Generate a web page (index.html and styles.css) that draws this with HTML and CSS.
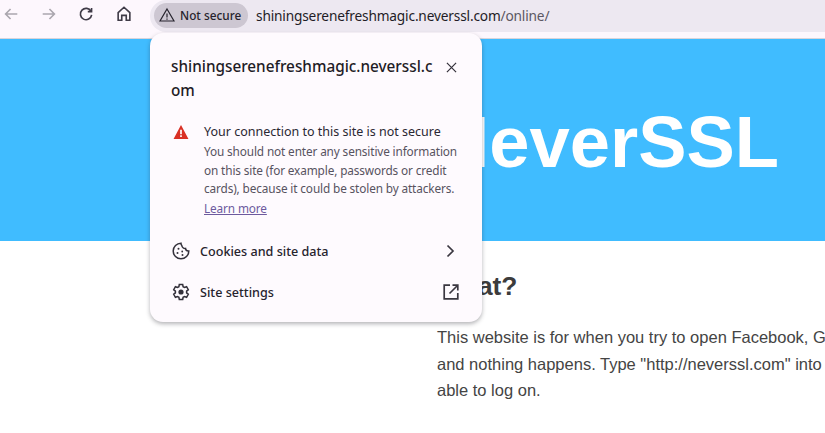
FILE: index.html
```html
<!DOCTYPE html>
<html lang="en">
<head>
<meta charset="utf-8">
<title>NeverSSL</title>
<link rel="stylesheet" href="styles.css">
</head>
<body>
<header class="toolbar">
  <nav class="nav">
    <svg class="nav-icon dim" viewBox="0 0 20 20"><path d="M17 10H4M9.500 4.500 4 10l5.500 5.500"/></svg>
    <svg class="nav-icon dim" viewBox="0 0 20 20"><path d="M3 10h13M10.500 4.500 16 10l-5.500 5.500"/></svg>
    <svg class="nav-icon" viewBox="0 0 20 20"><path d="M15.600 7A6.300 6.300 0 1 0 16.300 11M16.200 3.200V7.400H12"/></svg>
    <svg class="nav-icon" viewBox="0 0 20 20"><path d="M3.500 8.500 10 2.500l6.500 6V17h-4v-5.500H7.500V17h-4Z"/></svg>
  </nav>
  <div class="omnibox">
    <div class="chip">
      <svg class="chip-icon" viewBox="0 0 16 16"><path d="M8 2 15 14H1ZM8 6.500V10.500M8 11.500V12.800"/></svg>
      <span>Not secure</span>
    </div>
    <div class="url">shiningserenefreshmagic.neverssl.com<span class="url-path">/online/</span></div>
  </div>
</header>
<section class="hero"><h1>NeverSSL</h1></section>
<main class="content">
  <h2>What?</h2>
  <p>This website is for when you try to open Facebook, G<br>and nothing happens. Type "http://neverssl.com" into<br>able to log on.</p>
</main>
<aside class="popup">
  <div class="popup-head">
    <div class="popup-title">shiningserenefreshmagic.neverssl.c<br>om</div>
    <svg class="close" viewBox="0 0 12 12"><path d="M1 1 11 11M11 1 1 11"/></svg>
  </div>
  <div class="warning">
    <svg class="warn-icon" viewBox="0 0 16 15"><path class="warn-tri" d="M8 0 16 15H0Z"/><path class="warn-mark" d="M7.100 5H8.900V9.800H7.100ZM7.100 11H8.900V12.800H7.100Z"/></svg>
    <div class="warn-text">
      <div class="warn-title">Your connection to this site is not secure</div>
      <div class="warn-body">You should not enter any sensitive information<br>on this site (for example, passwords or credit<br>cards), because it could be stolen by attackers.</div>
      <a class="learn" href="#">Learn more</a>
    </div>
  </div>
  <div class="row row-first">
    <svg class="row-icon" viewBox="0 0 18 18"><path d="M9 1.200a7.800 7.800 0 1 0 7.800 7.800 3 3 0 0 1-3.300-2.600A3.300 3.300 0 0 1 9.800 3.500 3 3 0 0 1 9 1.200Z"/><circle class="dot" cx="6.500" cy="6.800" r="1"/><circle class="dot" cx="5.500" cy="11" r="1"/><circle class="dot" cx="10.200" cy="9.500" r=".9"/><circle class="dot" cx="10.500" cy="13" r="1"/></svg>
    <span class="row-label">Cookies and site data</span>
    <svg class="row-end chevron" viewBox="0 0 16 16"><path d="M5.500 2.500 11 8l-5.500 5.500"/></svg>
  </div>
  <div class="row">
    <svg class="row-icon" viewBox="0 0 18 18"><path d="M7.300 1.500h3.400l.4 2.200 1.400.8 2.100-.8 1.700 3-1.700 1.400v1.800l1.700 1.400-1.700 3-2.100-.8-1.400.8-.4 2.200H7.300l-.4-2.200-1.400-.8-2.100.8-1.700-3 1.700-1.400V8.100L1.700 6.700l1.700-3 2.100.8 1.400-.8Z"/><circle class="dot" cx="9" cy="9" r="2.600"/></svg>
    <span class="row-label">Site settings</span>
    <svg class="row-end launch" viewBox="0 0 16 16"><path d="M7 1.200H1.200V14.800H14.800V9M9.500 1.200H14.800V6.500M14.500 1.500 6.500 9.500"/></svg>
  </div>
</aside>
</body>
</html>
```
FILE: styles.css
```css
* { box-sizing: border-box; }
html, body { margin: 0; height: 100%; overflow: hidden; background: #fff; }
body { font-family: "Liberation Sans", Arial, sans-serif; width: 825px; height: 433px; position: relative; }

.toolbar { height: 39px; background: #fdf7fd; display: flex; align-items: flex-start; border-bottom: 1px solid #d8d4da; }
.nav { width: 150px; height: 32px; padding: 5px 0 0 2px; display: flex; gap: 19.500px; flex: none; }
.nav-icon { width: 18px; height: 18px; fill: none; stroke: #3f3b47; stroke-width: 1.800; }
.nav-icon.dim { stroke: #aaa6ae; }
.omnibox { flex: 1; height: 32px; background: #ede8f1; border-radius: 16px 0 0 16px; display: flex; align-items: center; padding: 0 0 2px 4px; }
.chip { height: 25px; width: 94px; background: #cdc7d2; border-radius: 13px; display: flex; align-items: center; padding-left: 5px; gap: 5px; font: 500 11.800px "Noto Sans", sans-serif; color: #26232d; flex: none; }
.chip-icon { width: 16px; height: 16px; fill: none; stroke: #26232d; stroke-width: 1.200; }
.url { margin-left: 8px; font: 13.700px "Noto Sans", sans-serif; letter-spacing: -.170px; color: #1f1c26; white-space: nowrap; }
.url-path { color: #5b5763; }

.hero { height: 202px; background: #40bcff; padding: 62px 0 0 437px; }
.hero h1 { margin: 0; font-size: 72.400px; line-height: 82px; font-weight: 700; color: #fff; white-space: nowrap; }

.content { padding: 29px 0 0 437px; color: #444; white-space: nowrap; }
.content h2 { margin: 0 0 22px; font-size: 26.300px; line-height: 32px; font-weight: 700; color: #3c3c3c; }
.content p { margin: 0; font-size: 16.500px; line-height: 26.500px; }

.popup { position: absolute; left: 150px; top: 33px; width: 332px; height: 289px; background: #fefafe; border-radius: 13px; box-shadow: 0 2px 4px rgba(40, 40, 50, .35); font-family: "Noto Sans", sans-serif; color: #1f1c26; padding: 21px 0 0 21px; }
.popup-head { display: flex; justify-content: space-between; align-items: flex-start; padding-right: 25px; }
.popup-title { font-size: 15.300px; font-weight: 500; line-height: 24px; white-space: nowrap; }
.close { width: 11px; height: 11px; margin-top: 8px; fill: none; stroke: #33303a; stroke-width: 1.300; }
.warning { display: flex; margin-top: 21px; }
.warn-icon { width: 16px; height: 14px; margin: 2px 15px 0 2px; flex: none; }
.warn-tri { fill: #d93025; }
.warn-mark { fill: #fff; }
.warn-title { font-size: 12.500px; line-height: 18px; color: #2a2732; white-space: nowrap; }
.warn-body { margin-top: 1px; font-size: 11.800px; letter-spacing: -.130px; line-height: 18.500px; color: #57535f; white-space: nowrap; }
.learn { display: block; margin-top: 1px; font-size: 11.800px; letter-spacing: -.130px; line-height: 18px; color: #6d5a9e; text-decoration: underline; }
.row { display: flex; align-items: center; height: 41px; padding-right: 24.500px; }
.row-first { margin-top: 14px; }
.row-icon { width: 18px; height: 18px; margin-left: 1px; flex: none; fill: none; stroke: #33303a; stroke-width: 1.500; }
.row-icon .dot { fill: #33303a; stroke: none; }
.row-label { margin-left: 10px; flex: 1; font-size: 12.600px; font-weight: 500; white-space: nowrap; color: #26232d; }
.row-end { width: 16px; height: 16px; fill: none; stroke: #3a3740; stroke-width: 1.700; flex: none; }
.row-end.launch { margin-right: -1.500px; }
```
